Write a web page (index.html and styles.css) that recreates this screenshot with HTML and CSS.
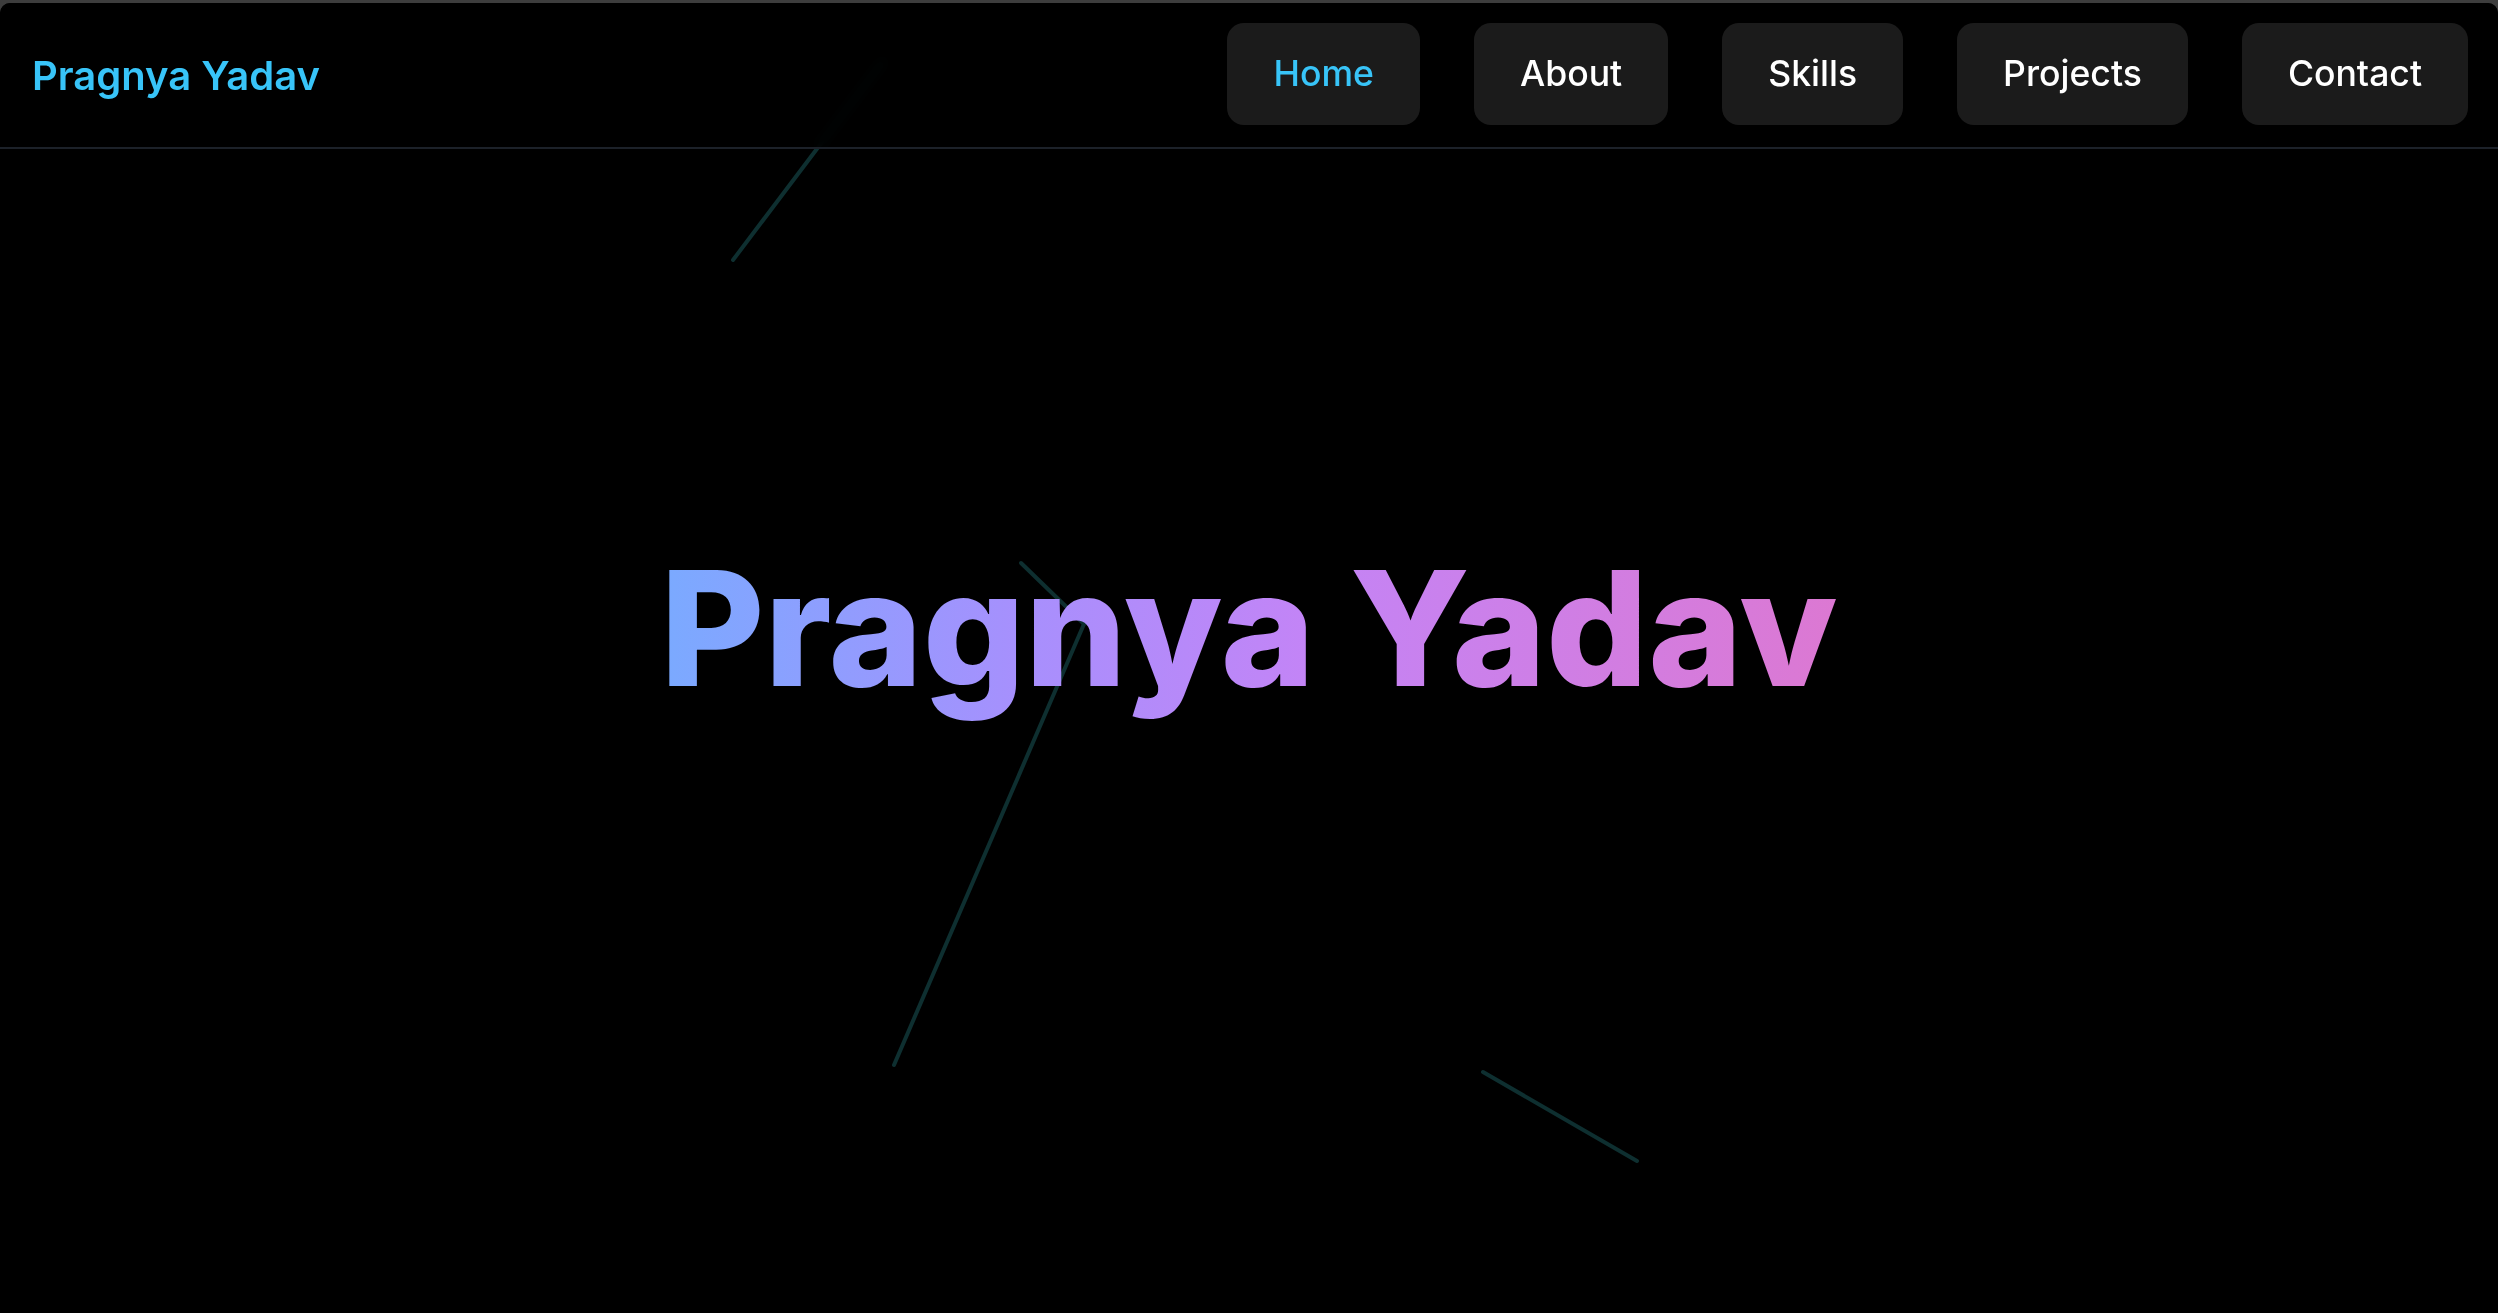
FILE: index.html
```html
<!DOCTYPE html>
<html lang="en">
<head>
<meta charset="utf-8">
<title>Pragnya Yadav</title>
<link rel="stylesheet" href="styles.css">
</head>
<body>
<div class="app">
  <svg class="bg-lines" width="2498" height="1310" viewBox="0 0 2498 1310" aria-hidden="true">
    <line x1="733" y1="257" x2="884" y2="57" />
    <line x1="1021" y1="560" x2="1084" y2="621" />
    <line x1="1084" y1="621" x2="894" y2="1062" />
    <line x1="1483" y1="1069" x2="1637" y2="1158" />
  </svg>
  <header class="nav">
    <a class="logo" href="#">Pragnya Yadav</a>
    <nav class="menu">
      <a class="menu-item active" href="#">Home</a>
      <a class="menu-item" href="#">About</a>
      <a class="menu-item" href="#">Skills</a>
      <a class="menu-item" href="#">Projects</a>
      <a class="menu-item" href="#">Contact</a>
    </nav>
  </header>
  <main class="hero">
    <h1 class="hero-title">Pragnya Yadav</h1>
  </main>
</div>
</body>
</html>
```

FILE: styles.css
```css
* { box-sizing: border-box; }
html, body {
  margin: 0;
  padding: 0;
  height: 100%;
  background: #3d3d3d;
  font-family: Inter, "Noto Sans", "Liberation Sans", sans-serif;
}
.app {
  position: relative;
  margin-top: 3px;
  min-height: calc(100vh - 3px);
  background: #000;
  border-radius: 10px 10px 0 0;
  overflow: hidden;
}
.bg-lines {
  position: absolute;
  left: 0;
  top: 0;
  z-index: 0;
}
.bg-lines line {
  stroke: #0e2f30;
  stroke-width: 4;
  stroke-linecap: round;
}
.nav {
  position: relative;
  z-index: 2;
  height: 146px;
  display: flex;
  align-items: center;
  justify-content: space-between;
  padding: 0 30px 0 32px;
  background: rgba(0, 0, 0, 0.82);
  backdrop-filter: blur(6px);
  border-bottom: 2px solid #1c2129;
}
.logo {
  color: #38c4f8;
  font-size: 40px;
  font-weight: 600;
  text-decoration: none;
}
.menu {
  display: flex;
  gap: 54px;
  padding-bottom: 2px;
}
.menu-item {
  display: block;
  background: #1b1b1b;
  color: #fff;
  font-size: 35.6px;
  font-weight: 500;
  line-height: 44px;
  padding: 29px 46px;
  border-radius: 17px;
  text-decoration: none;
}
.menu-item.active { color: #38c4f8; }
.hero {
  position: relative;
  z-index: 1;
  display: flex;
  justify-content: center;
  padding-top: 379px;
}
.hero-title {
  margin: 0;
  font-size: 160px;
  line-height: 200px;
  font-weight: 800;
  background: linear-gradient(90deg, #7aaaff 0%, #a690fd 30%, #c384f6 55%, #dc78d2 100%);
  -webkit-background-clip: text;
  background-clip: text;
  color: transparent;
}
```
